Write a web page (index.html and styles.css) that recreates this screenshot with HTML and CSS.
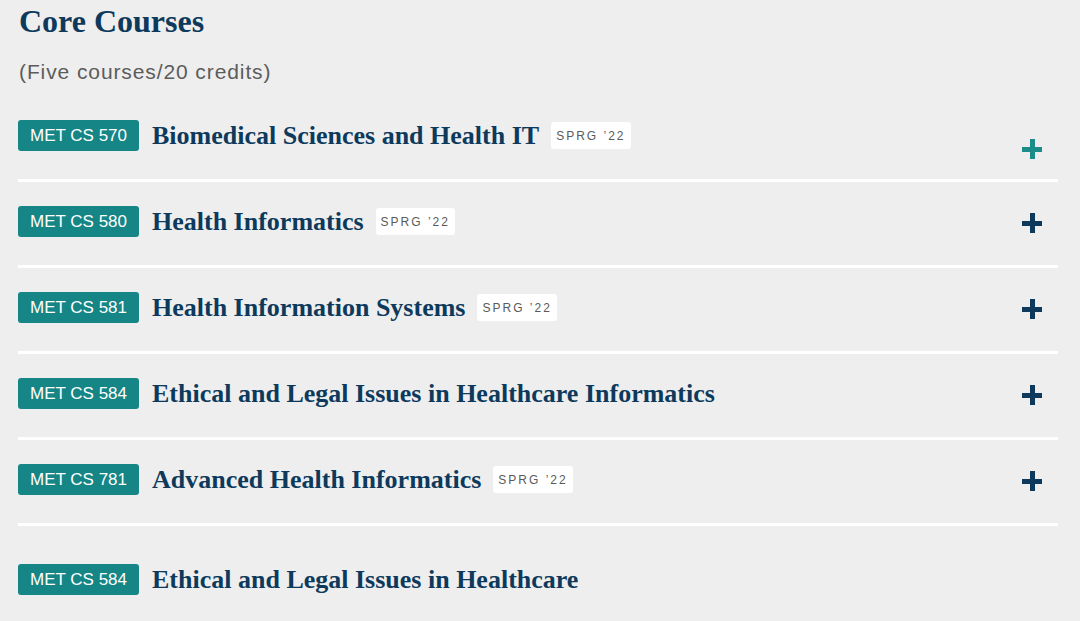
FILE: index.html
```html
<!DOCTYPE html>
<html lang="en">
<head>
<meta charset="utf-8">
<link rel="stylesheet" href="styles.css">
</head>
<body>
<div class="page">
  <h2 class="title">Core Courses</h2>
  <p class="sub">(Five courses/20 credits)</p>
  <ul class="courses">
    <li class="course">
      <div class="head"><span class="code">MET CS 570</span><span class="name">Biomedical Sciences and Health IT</span><span class="term">SPRG ’22</span></div>
      <span class="plus plus-active"></span>
    </li>
    <li class="course">
      <div class="head"><span class="code">MET CS 580</span><span class="name">Health Informatics</span><span class="term">SPRG ’22</span></div>
      <span class="plus"></span>
    </li>
    <li class="course">
      <div class="head"><span class="code">MET CS 581</span><span class="name">Health Information Systems</span><span class="term">SPRG ’22</span></div>
      <span class="plus"></span>
    </li>
    <li class="course">
      <div class="head"><span class="code">MET CS 584</span><span class="name">Ethical and Legal Issues in Healthcare Informatics</span></div>
      <span class="plus"></span>
    </li>
    <li class="course">
      <div class="head"><span class="code">MET CS 781</span><span class="name">Advanced Health Informatics</span><span class="term">SPRG ’22</span></div>
      <span class="plus"></span>
    </li>
    <li class="course course-last">
      <div class="head"><span class="code">MET CS 584</span><span class="name">Ethical and Legal Issues in Healthcare</span></div>
    </li>
  </ul>
</div>
</body>
</html>
```
FILE: styles.css
```css
html, body {
  margin: 0;
  padding: 0;
  background: #eeeeee;
}
.page {
  padding: 0 22px 0 18px;
  height: 621px;
  overflow: hidden;
}
.title {
  margin: 0;
  padding-top: 2px;
  padding-left: 1px;
  font-family: "Liberation Serif", serif;
  font-weight: 700;
  font-size: 32px;
  line-height: 38px;
  color: #0d3a5c;
}
.sub {
  margin: 19px 0 0 1px;
  font-family: "Liberation Sans", sans-serif;
  font-size: 21px;
  letter-spacing: 0.9px;
  line-height: 26px;
  color: #5c5c5c;
}
.courses {
  list-style: none;
  margin: 0;
  padding: 0;
  margin-top: 35px;
}
.course {
  display: flex;
  align-items: flex-start;
  justify-content: space-between;
  padding-bottom: 28px;
  border-bottom: 3px solid #ffffff;
  margin-bottom: 24px;
}
.course-last {
  margin-top: 38px;
}
.head {
  display: flex;
  align-items: center;
  height: 31px;
}
.code {
  display: inline-flex;
  align-items: center;
  height: 31px;
  padding: 0 12px;
  background: #158585;
  border-radius: 3px;
  color: #ffffff;
  font-family: "Liberation Sans", sans-serif;
  font-size: 17px;
}
.name {
  margin-left: 13px;
  font-family: "Liberation Serif", serif;
  font-weight: 700;
  font-size: 26px;
  color: #0d3a5c;
}
.term {
  margin-left: 12px;
  display: inline-flex;
  align-items: center;
  height: 27px;
  padding: 0 5px;
  background: #ffffff;
  border-radius: 3px;
  font-family: "Liberation Sans", sans-serif;
  font-size: 12px;
  letter-spacing: 2px;
  color: #5a5a5a;
}
.plus {
  position: relative;
  width: 20px;
  height: 20px;
  margin-top: 7px;
  margin-right: 16px;
}
.plus::before, .plus::after {
  content: "";
  position: absolute;
  background: #0d3a5c;
}
.plus::before {
  left: 0;
  top: 7.5px;
  width: 20px;
  height: 5px;
}
.plus::after {
  top: 0;
  left: 7.5px;
  width: 5px;
  height: 20px;
}
.plus-active {
  margin-top: 19px;
  margin-bottom: -8px;
}
.plus-active::before, .plus-active::after {
  background: #1a8c8a;
}
```
